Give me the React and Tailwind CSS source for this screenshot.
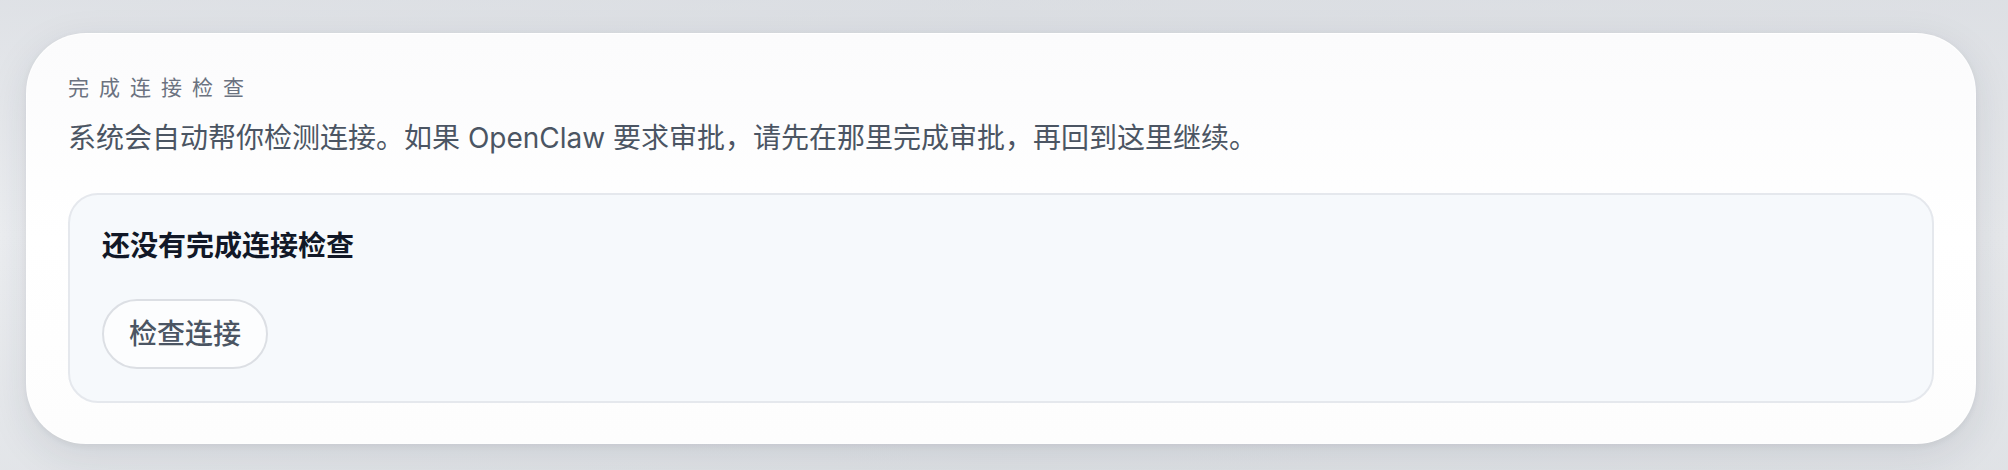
const font = { fontFamily: '"Inter", "Noto Sans CJK SC", sans-serif' };

// Connection check step - shows status and a retry button
const ConnectionCheck = () => {
  return (
    <div className="ml-[26px] w-[1950px] rounded-[60px] bg-white border border-white/80 shadow-[0_12px_40px_rgba(30,41,59,0.10),0_2px_6px_rgba(30,41,59,0.06)] bg-gradient-to-b from-[#fbfbfc] via-white to-[#fdfdfd] px-[41px] pt-[40px] pb-[40px]">
      <div className="text-[21px] leading-[28px] tracking-[10px] text-[#6b7280]">完成连接检查</div>
      <p className="mt-[15px] text-[28px] leading-[42px] text-[#4b5563]">
        系统会自动帮你检测连接。如果 OpenClaw 要求审批，请先在那里完成审批，再回到这里继续。
      </p>
      <div className="mt-[34px] rounded-[30px] border-2 border-[#e5e8ed] bg-[#f6f9fc] px-[32px] pt-[30px] pb-[32px]">
        <div className="text-[28px] leading-[42px] font-semibold text-[#111827]">还没有完成连接检查</div>
        <button className="mt-[32px] h-[70px] px-[25px] rounded-full border-2 border-[#dcdfe4] bg-[#fcfdfe] text-[28px] font-medium text-[#4b5563]">
          检查连接
        </button>
      </div>
    </div>
  );
};

export default function App() {
  return (
    <div style={font} className="w-[2008px] h-[470px] overflow-hidden bg-gradient-to-r from-[#eceef1] via-[#dfe2e6] to-[#e6e8eb]">
      <div className="h-full pt-[33px] bg-gradient-to-b from-[#d9dce1]/70 via-transparent to-[#dcdfe3]/60">
        <ConnectionCheck />
      </div>
    </div>
  );
}
